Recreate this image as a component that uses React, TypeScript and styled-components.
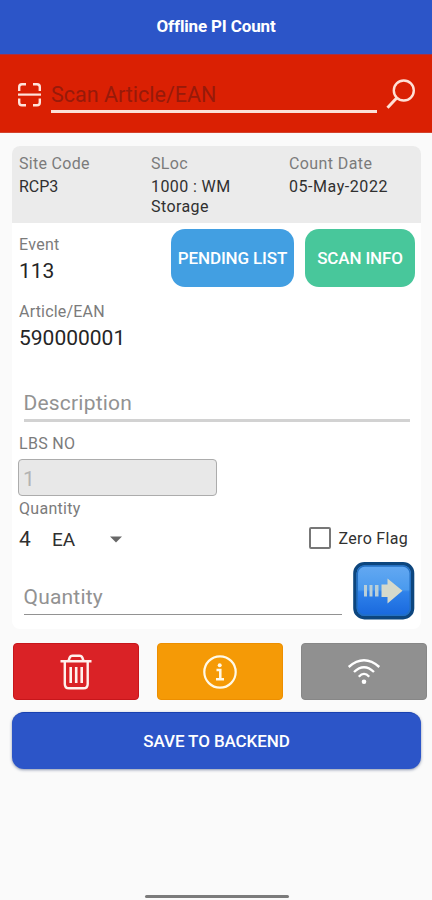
import React from 'react';
import styled, { createGlobalStyle } from 'styled-components';

const GlobalStyle = createGlobalStyle`
  * { box-sizing: border-box; }
  body { margin: 0; background: #fafafa; font-family: Roboto, sans-serif; }
  button { font-family: inherit; border: 0; padding: 0; }
`;

const Screen = styled.div`
  width: 432px;
  height: 900px;
  overflow: hidden;
  display: flex;
  flex-direction: column;
  background: #fafafa;
`;

const TitleBar = styled.header`
  height: 54px;
  flex: none;
  background: #2c55c8;
  color: #fff;
  text-align: center;
  font-size: 17px;
  font-weight: 700;
  line-height: 53px;
  letter-spacing: -0.15px;
`;

const ScanBar = styled.div`
  height: 79px;
  flex: none;
  background: #da2003;
  border-top: 1px solid #a83043;
  border-bottom: 1px solid #d3432d;
  display: flex;
  align-items: flex-start;
  padding: 0 16px 0 18px;
`;

const ScanIcon = styled.svg`
  margin-top: 28px;
  flex: none;
`;

const ScanField = styled.div`
  width: 326px;
  height: 58px;
  margin-left: 10px;
  padding-top: 26px;
  border-bottom: 3px solid #fbe1d8;
  color: #971a0a;
  font-size: 21.5px;
  line-height: 27px;
`;

const SearchIcon = styled.svg`
  margin: 24px 0 0 9px;
  flex: none;
`;

const Card = styled.section`
  width: 409px;
  height: 483px;
  flex: none;
  margin: 13px 0 0 12px;
  background: #fff;
  border-radius: 8px;
  overflow: hidden;
`;

const Summary = styled.div`
  height: 77px;
  background: #ebebeb;
  display: grid;
  grid-template-columns: 132px 138px 1fr;
  padding: 8px 0 0 7px;
`;

const Label = styled.div<{ $spacing?: number }>`
  color: #7b7b7b;
  font-size: 16px;
  line-height: 20px;
  letter-spacing: ${(p) => p.$spacing ?? 0.3}px;
`;

const Value = styled.div<{ $spacing?: number }>`
  color: #303030;
  font-size: 16px;
  line-height: 20px;
  margin-top: 3px;
  width: 120px;
  letter-spacing: ${(p) => p.$spacing ?? 0.4}px;
`;

const Figure = styled.div`
  color: #252525;
  font-size: 21px;
  line-height: 26px;
  margin-top: 3px;
`;

const EventRow = styled.div`
  height: 78px;
  display: flex;
  padding: 6px 6px 0 7px;
`;

const EventInfo = styled.div`
  width: 152px;
  padding-top: 6px;
`;

const PillButton = styled.button<{ $width: number; $color: string; $left?: number }>`
  width: ${(p) => p.$width}px;
  height: 58px;
  margin-left: ${(p) => p.$left ?? 0}px;
  border-radius: 14px;
  background: ${(p) => p.$color};
  color: #fff;
  font-size: 17px;
  font-weight: 500;
  letter-spacing: -0.14px;
  white-space: nowrap;
`;

const ArticleBlock = styled.div`
  height: 77px;
  padding: 1px 0 0 7px;
`;

const Underlined = styled.div<{ $width: number; $height: number; $line: string; $leading: number }>`
  width: ${(p) => p.$width}px;
  height: ${(p) => p.$height}px;
  border-bottom: ${(p) => p.$line};
  color: #929292;
  font-size: 21px;
  line-height: ${(p) => p.$leading}px;
  letter-spacing: 0.2px;
`;

const DescriptionRow = styled.div`
  padding: 10px 0 0 11.5px;
  height: 56px;
`;

const LbsBlock = styled.div`
  padding-left: 7px;
`;

const DisabledField = styled.div`
  width: 199px;
  height: 37px;
  margin: 5px 0 3px -1px;
  padding: 6px 0 0 4px;
  border: 1px solid #acacac;
  border-radius: 4px;
  background: #e8e8e8;
  color: #b3b3b3;
  font-size: 21px;
  line-height: 26px;
`;

const UnitRow = styled.div`
  height: 40px;
  display: flex;
  align-items: center;
  padding: 0 13px 0 7px;
`;

const Count = styled.div`
  width: 33px;
  color: #303030;
  font-size: 21px;
`;

const Unit = styled.div`
  width: 58px;
  color: #303030;
  font-size: 19px;
  padding-top: 1px;
`;

const ZeroFlag = styled.div`
  margin-left: auto;
  padding-bottom: 2px;
  display: flex;
  align-items: center;
  gap: 8px;
  color: #303030;
  font-size: 16px;
  letter-spacing: 0.3px;
`;

const CheckBox = styled.span`
  width: 22px;
  height: 22px;
  border: 2px solid #777;
  border-radius: 2px;
`;

const EntryRow = styled.div`
  display: flex;
  margin-top: 3px;
  padding-left: 11.5px;
`;

const EntryField = styled.div`
  padding-top: 21px;
`;

const NextButton = styled.button`
  width: 62px;
  height: 58px;
  margin-left: 11.5px;
  background: none;
  svg { display: block; }
`;

const Actions = styled.div`
  display: flex;
  gap: 18px;
  padding: 14px 0 0 12.5px;
`;

const ActionButton = styled.button<{ $color: string; $edge: string }>`
  width: 126px;
  height: 57px;
  flex: none;
  border-radius: 4px;
  border: 1px solid ${(p) => p.$edge};
  background: ${(p) => p.$color};
  display: grid;
  place-items: center;
`;

const SaveButton = styled.button`
  width: 409px;
  height: 57px;
  flex: none;
  margin: 12px 0 0 12px;
  border-radius: 12px;
  border-top: 1px solid #1840b0;
  background: #2c55c8;
  box-shadow: 0 1px 3px rgba(30, 50, 100, 0.5);
  color: #fff;
  font-size: 17px;
  font-weight: 500;
  letter-spacing: -0.1px;
`;

const HomeIndicator = styled.div`
  width: 144px;
  height: 3px;
  flex: none;
  margin: auto 0 2px 145px;
  border-radius: 2px;
  background: #7b7b7b;
`;

export default function App() {
  return (
    <>
      <GlobalStyle />
      <Screen>
        <TitleBar>Offline PI Count</TitleBar>
        <ScanBar>
          <ScanIcon width="23" height="24" viewBox="0 0 23 24" fill="none" stroke="#ffe3db" strokeWidth="2.4">
            <path d="M1.200 8V4Q1.200 1.300 4 1.300H8M15 1.300h4Q21.800 1.300 21.800 4V8M1.200 15.500V19.500Q1.200 22.300 4 22.300H8M15 22.300h4Q21.800 22.300 21.800 19.500V15.500" />
            <path d="M0 11.600H23" strokeWidth="2.200" />
          </ScanIcon>
          <ScanField>Scan Article/EAN</ScanField>
          <SearchIcon width="30" height="31" viewBox="0 0 30 31" fill="none" stroke="#ffe0d6" strokeWidth="2.400">
            <circle cx="17.800" cy="11.500" r="10" />
            <path d="M10.700 19L1.500 28.800" strokeWidth="3" />
          </SearchIcon>
        </ScanBar>

        <Card>
          <Summary>
            <div>
              <Label>Site Code</Label>
              <Value $spacing={0}>RCP3</Value>
            </div>
            <div>
              <Label>SLoc</Label>
              <Value>1000 : WM Storage</Value>
            </div>
            <div>
              <Label $spacing={0.4}>Count Date</Label>
              <Value $spacing={0.55}>05-May-2022</Value>
            </div>
          </Summary>
          <EventRow>
            <EventInfo>
              <Label>Event</Label>
              <Figure>113</Figure>
            </EventInfo>
            <PillButton $width={123} $color="#429fe2">PENDING LIST</PillButton>
            <PillButton $width={110} $left={11} $color="#48c79b">SCAN INFO</PillButton>
          </EventRow>
          <ArticleBlock>
            <Label $spacing={0.2}>Article/EAN</Label>
            <Figure>590000001</Figure>
          </ArticleBlock>
          <DescriptionRow>
            <Underlined $width={386} $height={34} $leading={30} $line="3px solid #d2d2d2">Description</Underlined>
          </DescriptionRow>
          <LbsBlock>
            <Label>LBS NO</Label>
            <DisabledField>1</DisabledField>
            <Label>Quantity</Label>
          </LbsBlock>
          <UnitRow>
            <Count>4</Count>
            <Unit>EA</Unit>
            <svg width="13" height="7" viewBox="0 0 13 7">
              <path d="M0 0.500H12L6 6.500Z" fill="#686868" />
            </svg>
            <ZeroFlag>
              <CheckBox />
              Zero Flag
            </ZeroFlag>
          </UnitRow>
          <EntryRow>
            <EntryField>
              <Underlined $width={318} $height={32} $leading={28} $line="1px solid #929292">Quantity</Underlined>
            </EntryField>
            <NextButton aria-label="Next">
              <svg width="62" height="58" viewBox="0 0 62 58">
                <defs>
                  <linearGradient id="face" x1="0" y1="0" x2="0" y2="1">
                    <stop offset="0" stopColor="#66aaf2" />
                    <stop offset="0.480" stopColor="#4a9aee" />
                    <stop offset="0.520" stopColor="#2f82ea" />
                    <stop offset="1" stopColor="#1766dc" />
                  </linearGradient>
                </defs>
                <rect x="1.900" y="1.700" width="57.700" height="54" rx="9.500" fill="url(#face)" stroke="#0d467e" strokeWidth="3.400" />
                <rect x="4.300" y="4.100" width="52.900" height="49.200" rx="7.500" fill="none" stroke="#2370c4" strokeWidth="1.500" />
                <path d="M11 23h3v11.500h-3zM16.500 23h3v11.500h-3zM22 23h3.500v11.500H22z" fill="#b9cfd8" />
                <path d="M28.500 22.500h6V16.500L49.500 28.700 34.500 41.500v-6.500h-6z" fill="#d5d9cb" />
              </svg>
            </NextButton>
          </EntryRow>
        </Card>

        <Actions>
          <ActionButton $color="#da2226" $edge="#c7161b" aria-label="Delete">
            <svg width="32" height="36" viewBox="0 0 32 36" fill="none" stroke="#fff1ed" strokeWidth="2.400">
              <path d="M0.500 7.200H31.500M8.500 7L9.500 4Q10.300 1.700 12.500 1.700H19.500Q21.700 1.700 22.500 4L23.500 7M4.800 8V30Q4.800 34.300 9 34.300H23.500Q27.700 34.300 27.700 30V8" />
              <path d="M10.700 13V29M16.200 13V29M21.700 13V29" strokeWidth="2.600" />
            </svg>
          </ActionButton>
          <ActionButton $color="#f59a06" $edge="#ed8f00" aria-label="Information">
            <svg width="34" height="36" viewBox="0 0 34 36" fill="none" stroke="#fff9e7" strokeWidth="2.200">
              <circle cx="17" cy="18" r="15.700" />
              <circle cx="16.700" cy="11.300" r="2" fill="#fff9e7" stroke="none" />
              <path d="M13.500 16H17.300V25M13 25.200H21" strokeWidth="2.500" />
            </svg>
          </ActionButton>
          <ActionButton $color="#909090" $edge="#878787" aria-label="Wireless">
            <svg width="34" height="28" viewBox="0 0 34 28" fill="none" stroke="#fff" strokeWidth="2.400">
              <path d="M1.700 9Q17 -4.500 32.300 9M7 14Q17 4.500 27 14M11.800 18.700Q17 13 22.200 18.700" />
              <circle cx="17" cy="23.800" r="2.300" fill="#fff" stroke="none" />
            </svg>
          </ActionButton>
        </Actions>
        <SaveButton>SAVE TO BACKEND</SaveButton>
        <HomeIndicator />
      </Screen>
    </>
  );
}
